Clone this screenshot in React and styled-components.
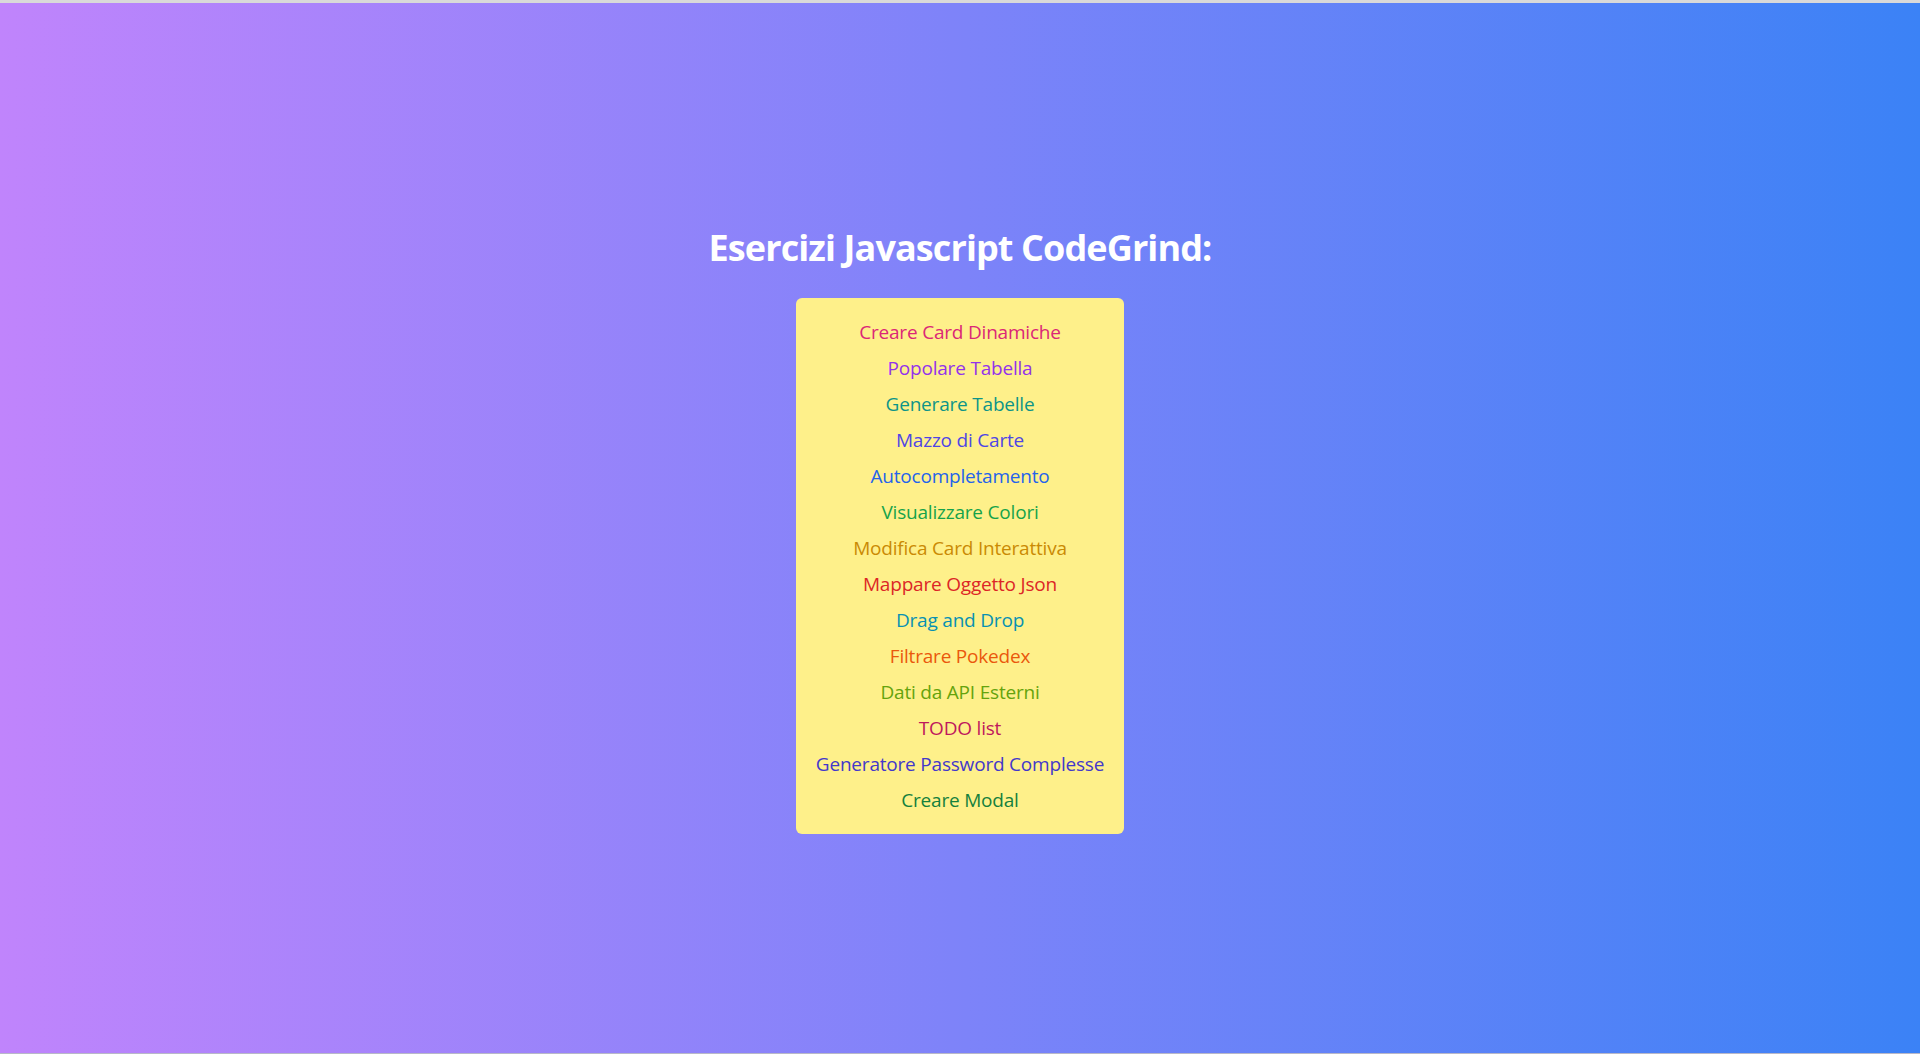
import React from 'react'
import styled, { createGlobalStyle } from 'styled-components'

const GlobalStyle = createGlobalStyle`
    html, body {
        margin: 0;
        padding: 0;
    }
    body {
        font-family: "Open Sans", "Noto Sans", sans-serif;
    }
`

const Page = styled.main`
    box-sizing: border-box;
    height: 1054px;
    padding-top: 6px;
    border-top: 3px solid #d9d9d9;
    border-bottom: 1px solid #b8b8c8;
    background: linear-gradient(to right, #c084fc, #3b82f6);
    display: flex;
    flex-direction: column;
    align-items: center;
    justify-content: center;
`

const Title = styled.h1`
    margin: 0 0 30px;
    font-size: 36px;
    line-height: 40px;
    font-weight: 700;
    color: #ffffff;
    letter-spacing: -0.9px;
`

const Card = styled.ul`
    list-style: none;
    margin: 0;
    padding: 20px;
    background-color: #fef08a;
    border-radius: 6px;
    display: flex;
    flex-direction: column;
    align-items: center;
    gap: 8px;
`

const Item = styled.li`
    font-size: 19px;
    line-height: 28px;
    color: ${({ $color }) => $color};
    letter-spacing: -0.2px;
    cursor: pointer;
`

const esercizi = [
    { name: 'Creare Card Dinamiche', color: '#db2777' },
    { name: 'Popolare Tabella', color: '#9333ea' },
    { name: 'Generare Tabelle', color: '#0d9488' },
    { name: 'Mazzo di Carte', color: '#4f46e5' },
    { name: 'Autocompletamento', color: '#2563eb' },
    { name: 'Visualizzare Colori', color: '#16a34a' },
    { name: 'Modifica Card Interattiva', color: '#ca8a04' },
    { name: 'Mappare Oggetto Json', color: '#dc2626' },
    { name: 'Drag and Drop', color: '#0891b2' },
    { name: 'Filtrare Pokedex', color: '#ea580c' },
    { name: 'Dati da API Esterni', color: '#65a30d' },
    { name: 'TODO list', color: '#be185d' },
    { name: 'Generatore Password Complesse', color: '#4338ca' },
    { name: 'Creare Modal', color: '#15803d' },
]

const App = () => {
    return (
        <>
            <GlobalStyle />
            <Page>
                <Title>Esercizi Javascript CodeGrind:</Title>
                <Card>
                    {esercizi.map((e) => (
                        <Item key={e.name} $color={e.color}>{e.name}</Item>
                    ))}
                </Card>
            </Page>
        </>
    )
}

export default App
